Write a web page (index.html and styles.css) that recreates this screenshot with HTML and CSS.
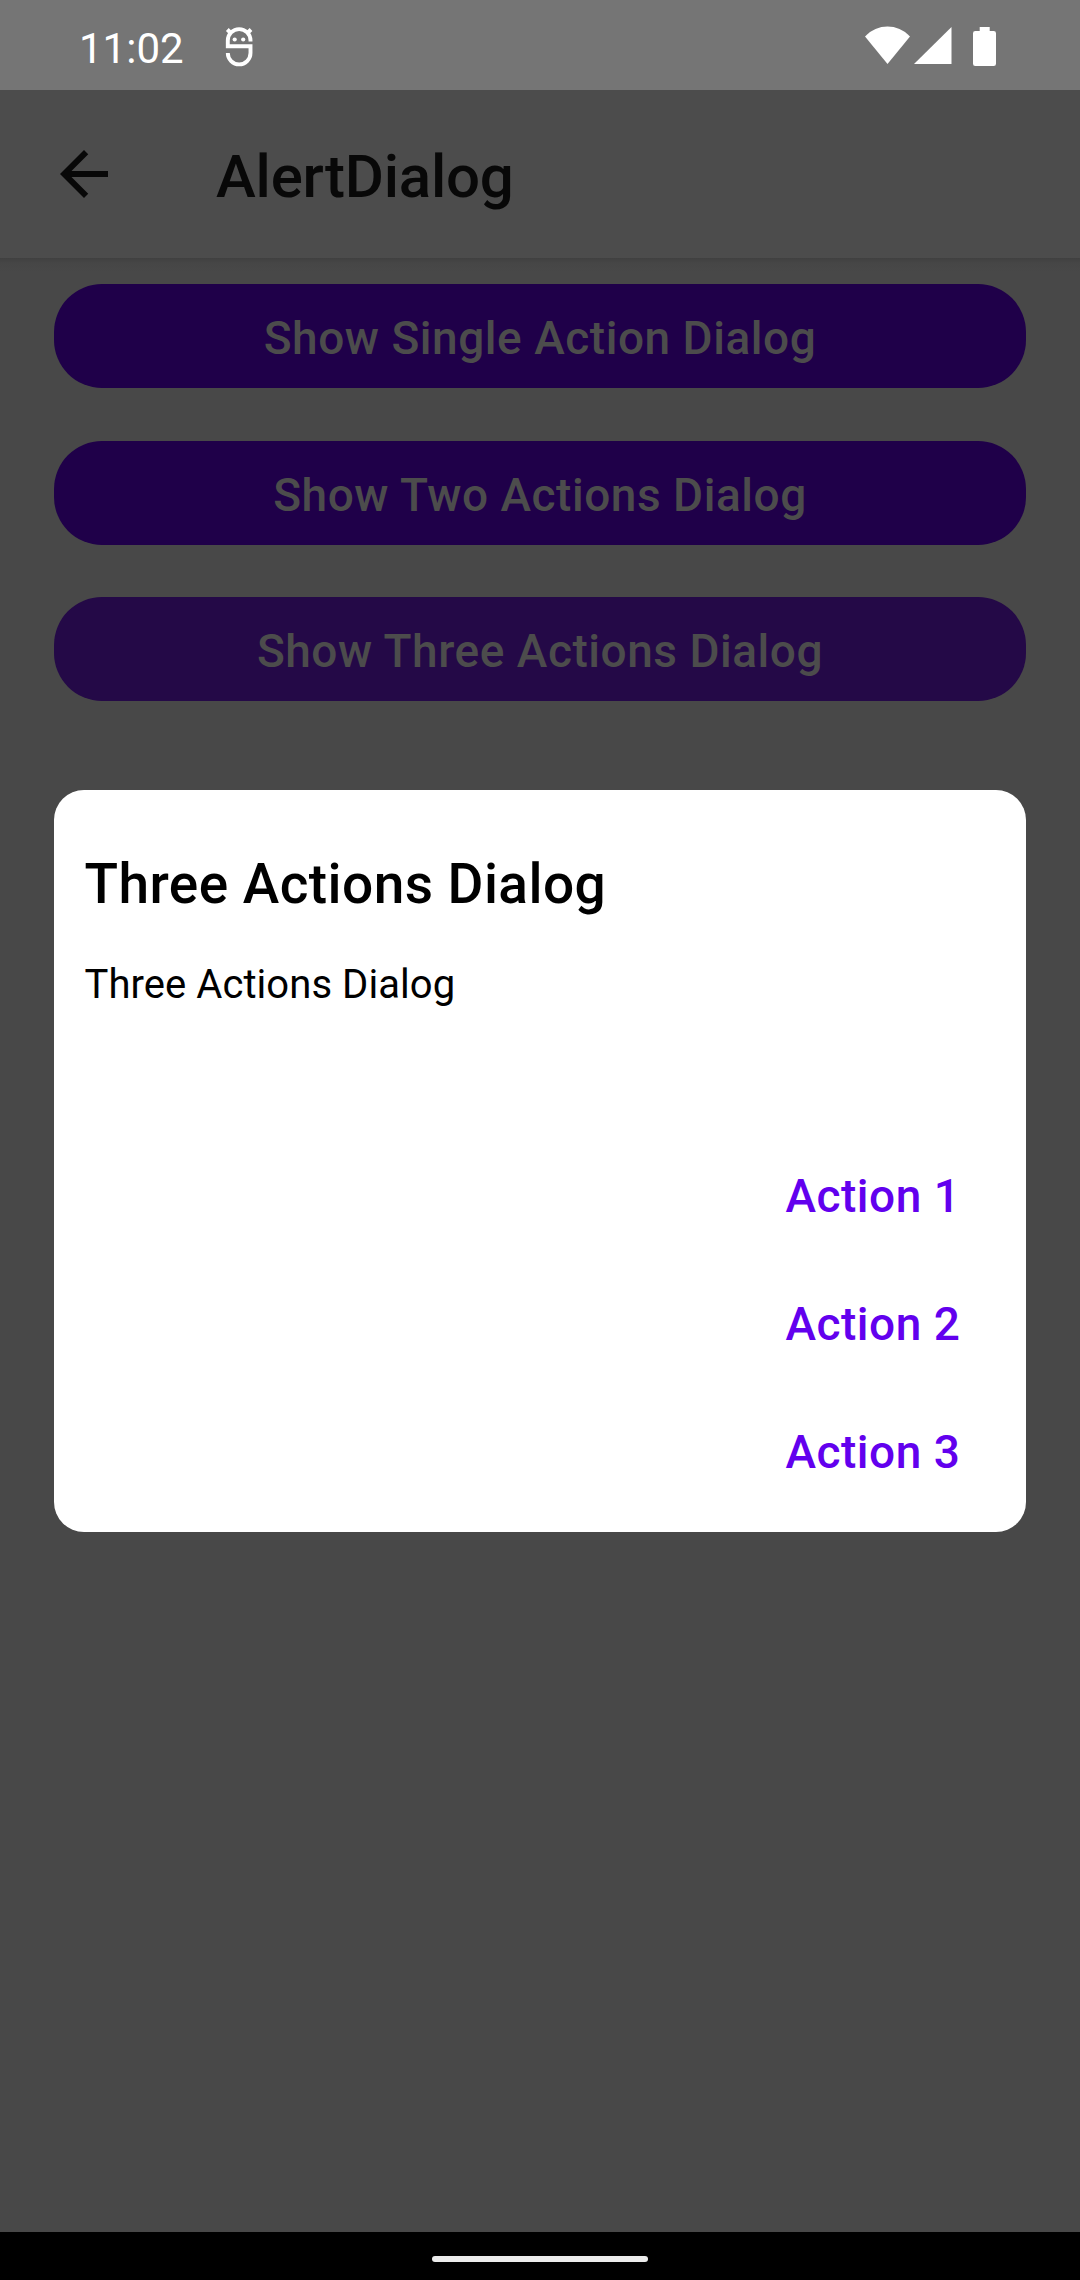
FILE: index.html
```html
<!DOCTYPE html>
<html lang="en">
<head>
<meta charset="utf-8">
<title>AlertDialog</title>
<link rel="stylesheet" href="styles.css">
</head>
<body>
<div class="screen">
  <header class="status">
    <span class="clock">11:02</span>
    <svg class="debug" viewBox="0 0 30 42">
      <path d="M26.500 15.500V14.500A11.350 11.350 0 0 0 3.800 14.500V20.200H26.500V27A11.350 11.350 0 0 1 3.800 27M3.300 3.500L7.300 7.500M27 3.500L23 7.500" fill="none" stroke="#fff" stroke-width="3.900"/>
      <circle cx="10.700" cy="13.500" r="2.100" fill="#fff"/>
      <circle cx="19.200" cy="13.500" r="2.100" fill="#fff"/>
    </svg>
    <svg class="signals" viewBox="0 0 131 40" fill="#fff">
      <path d="M0 10.500C12.500 -2.800 32.500 -2.800 45 10.500L22.500 38Z"/>
      <path d="M49 38L86.500 1V38Z"/>
      <path d="M114.700 1h10v4h4q2.300 0 2.300 2.300v30.400q0 2.300-2.300 2.300h-18.400q-2.300 0-2.300-2.300V7.300q0-2.300 2.300-2.300h4.400Z"/>
    </svg>
  </header>
  <nav class="appbar">
    <svg class="back" viewBox="0 0 24 24"><path d="M20 11H7.830l5.590-5.590L12 4l-8 8 8 8 1.410-1.410L7.830 13H20v-2z" fill="#080808"/></svg>
    <h1 class="title">AlertDialog</h1>
  </nav>
  <main class="content">
    <div class="buttons">
      <button class="btn">Show Single Action Dialog</button>
      <button class="btn">Show Two Actions Dialog</button>
      <button class="btn pressed">Show Three Actions Dialog</button>
    </div>
    <section class="dialog" role="alertdialog">
      <h2 class="heading">Three Actions Dialog</h2>
      <p class="message">Three Actions Dialog</p>
      <div class="actions">
        <button class="action">Action 1</button>
        <button class="action">Action 2</button>
        <button class="action">Action 3</button>
      </div>
    </section>
  </main>
  <footer class="navbar"><div class="handle"></div></footer>
</div>
</body>
</html>
```
FILE: styles.css
```css
* { box-sizing: border-box; }
body { margin: 0; font-family: Roboto, sans-serif; }
h1, h2, p { margin: 0; font-weight: 500; }
button { border: 0; margin: 0; padding: 0; background: none; font-family: inherit; font-weight: 500; font-size: 46px; letter-spacing: 0.53px; }

.screen { width: 1080px; height: 2280px; display: flex; flex-direction: column; background: #484848; }

.status { height: 90px; padding: 0 84px 0 79px; display: flex; background: #757575; color: #fff; }
.clock { width: 145px; font-size: 42px; line-height: 97px; }
.debug { width: 30px; height: 42px; margin-top: 26px; }
.signals { width: 131px; height: 40px; margin: 26px 0 0 auto; }

.appbar { height: 168px; padding-left: 48px; display: flex; align-items: center; gap: 96px; background: #4c4c4c; }
.back { width: 72px; height: 72px; }
.title { padding-top: 5px; font-size: 60px; line-height: 70px; letter-spacing: -0.22px; color: #080808; }

.content { flex: 1; padding: 26px 54px 0; background: linear-gradient(#404040, #464646 5px, #484848 14px); }
.buttons { display: grid; grid-template-rows: 104px 104px 104px; row-gap: 52.5px; }
.btn { padding-top: 4px; border-radius: 48px; background: #1f0049; color: #4c4c4c; line-height: 100px; text-align: center; }
.pressed { background: #240947; }

.dialog { height: 742px; margin-top: 89px; padding: 59px 65.5px 0 30.5px; border-radius: 30px; background: #fff; color: #000; }
.heading { font-size: 55px; line-height: 70px; letter-spacing: 0.44px; }
.message { margin-top: 41px; font-size: 40px; font-weight: 400; line-height: 50px; letter-spacing: 0.06px; }
.actions { margin-top: 122px; display: flex; flex-direction: column; align-items: flex-end; }
.action { height: 128px; color: #6200ee; line-height: 128px; }

.navbar { height: 48px; display: flex; align-items: center; justify-content: center; background: #000; }
.handle { width: 216px; height: 6px; margin-top: 6px; border-radius: 3px; background: #ececec; }
```
